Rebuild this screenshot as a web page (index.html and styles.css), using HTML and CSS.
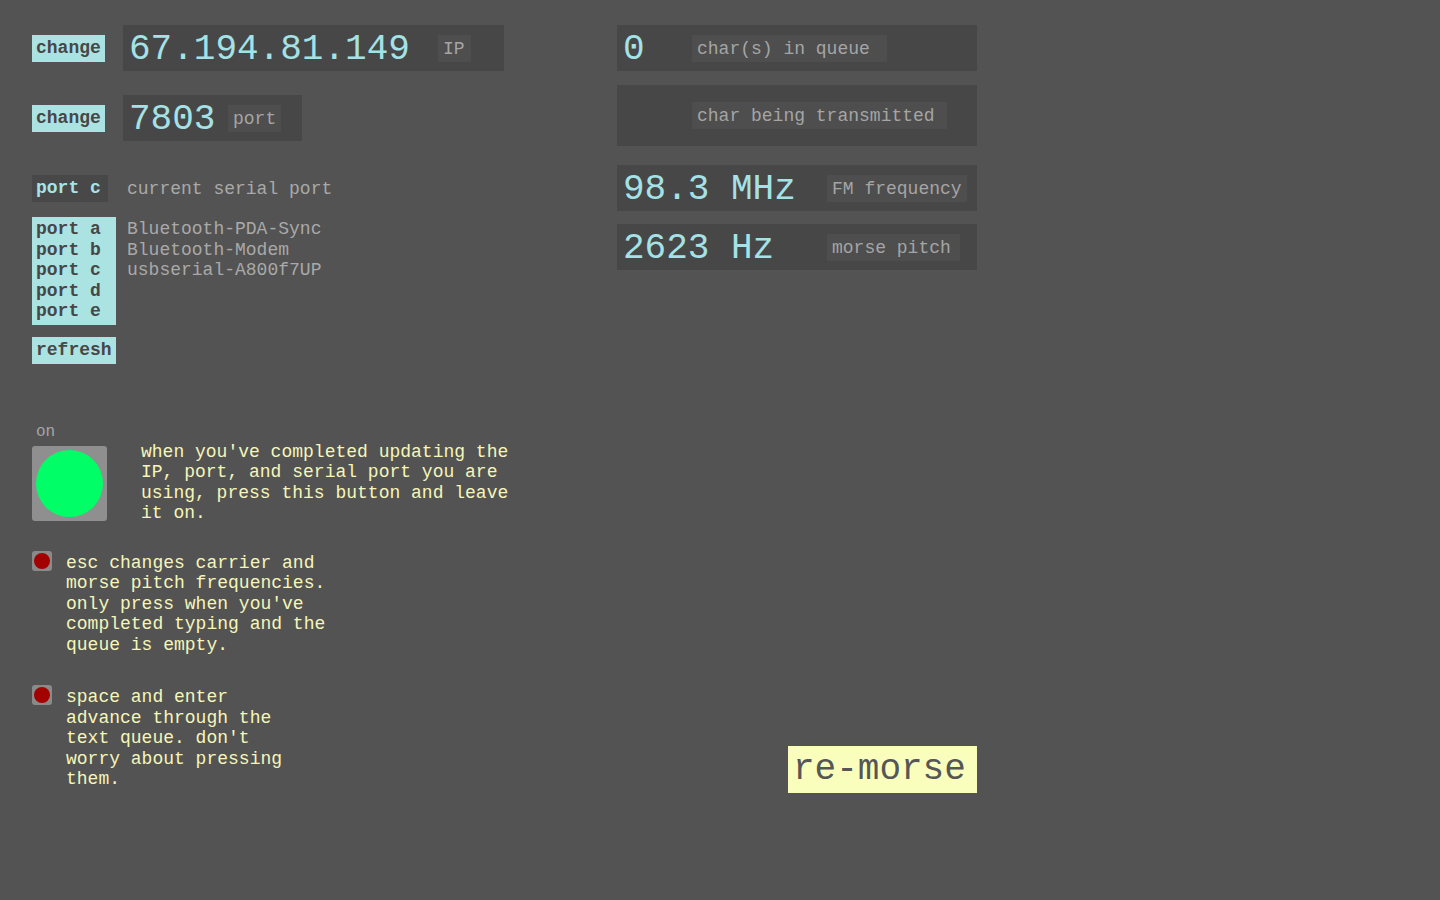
FILE: index.html
```html
<!DOCTYPE html>
<html>
<head>
<meta charset="utf-8">
<title>re-morse</title>
<link rel="stylesheet" href="styles.css">
</head>
<body>
<div class="app">
  <div class="col-left">
    <div class="row row-ip">
      <div class="btn">change</div>
      <div class="panel panel-ip">
        <span class="big val-ip">67.194.81.149</span>
        <span class="lbl lbl-ip">IP</span>
      </div>
    </div>
    <div class="row row-port">
      <div class="btn">change</div>
      <div class="panel panel-port">
        <span class="big val-port">7803</span>
        <span class="lbl lbl-port">port</span>
      </div>
    </div>
    <div class="row row-serial">
      <div class="current">port c</div>
      <span class="grey">current serial port</span>
    </div>
    <div class="row row-list">
      <div class="portlist">
        <div>port a</div>
        <div>port b</div>
        <div>port c</div>
        <div>port d</div>
        <div>port e</div>
      </div>
      <div class="devices grey">
        <div>Bluetooth-PDA-Sync</div>
        <div>Bluetooth-Modem</div>
        <div>usbserial-A800f7UP</div>
      </div>
    </div>
    <div class="row row-refresh">
      <div class="btn btn-refresh">refresh</div>
    </div>
    <div class="on-label">on</div>
    <div class="row row-toggle">
      <div class="toggle"><div class="toggle-dot"></div></div>
      <p class="note note-toggle">when you've completed updating the<br>IP, port, and serial port you are<br>using, press this button and leave<br>it on.</p>
    </div>
    <div class="row row-key">
      <div class="key"><div class="key-dot"></div></div>
      <p class="note">esc changes carrier and<br>morse pitch frequencies.<br>only press when you've<br>completed typing and the<br>queue is empty.</p>
    </div>
    <div class="row row-key row-key2">
      <div class="key"><div class="key-dot"></div></div>
      <p class="note">space and enter<br>advance through the<br>text queue. don't<br>worry about pressing<br>them.</p>
    </div>
  </div>
  <div class="col-right">
    <div class="panel rpanel">
      <span class="big num-short">0</span>
      <span class="lbl lbl-queue">char(s) in queue</span>
    </div>
    <div class="panel rpanel rpanel-tall">
      <span class="big num-short"></span>
      <span class="lbl lbl-trans">char being transmitted</span>
    </div>
    <div class="panel rpanel rpanel-fm">
      <span class="big num-long">98.3 MHz</span>
      <span class="lbl lbl-fm">FM frequency</span>
    </div>
    <div class="panel rpanel rpanel-pitch">
      <span class="big num-long">2623 Hz</span>
      <span class="lbl lbl-pitch">morse pitch</span>
    </div>
    <div class="remorse">re-morse</div>
  </div>
</div>
</body>
</html>
```

FILE: styles.css
```css
html, body {
  margin: 0;
  padding: 0;
  background: #535353;
  width: 1440px;
  height: 900px;
  overflow: hidden;
}

body {
  font-family: "Liberation Mono", "Courier New", monospace;
  font-size: 18px;
  color: #a9a9a9;
}

.app {
  display: flex;
  padding: 25px 0 0 32px;
}

.col-left {
  width: 585px;
  display: flex;
  flex-direction: column;
}

.col-right {
  width: 360px;
  display: flex;
  flex-direction: column;
}

.row {
  display: flex;
  align-items: center;
}

.btn {
  background: #abe3e3;
  color: #474747;
  font-weight: bold;
  height: 27px;
  line-height: 27px;
  padding: 0 4px;
  width: 65px;
}

.row-ip .btn,
.row-port .btn {
  margin-right: 18px;
}

.panel {
  background: #474747;
  height: 46px;
  display: flex;
  align-items: center;
  box-sizing: border-box;
}

.panel-ip {
  width: 381px;
  padding-left: 6px;
}

.panel-port {
  width: 179px;
  padding-left: 6px;
}

.row-port {
  margin-top: 24px;
}

.big {
  font-size: 36px;
  color: #a4e2e6;
  height: 46px;
  line-height: 50px;
  white-space: pre;
}

.val-ip {
  width: 309px;
}

.val-port {
  width: 99px;
}

.lbl {
  background: #4e4e4e;
  color: #a5a5a5;
  height: 27px;
  line-height: 28px;
  padding-left: 5px;
  box-sizing: border-box;
  white-space: pre;
}

.lbl-ip { width: 33px; }
.lbl-port { width: 53px; }
.lbl-queue { width: 195px; }
.lbl-trans { width: 255px; }
.lbl-fm { width: 140px; }
.lbl-pitch { width: 133px; }

.row-serial {
  margin-top: 34px;
}

.current {
  background: #484848;
  color: #a6e4e8;
  font-weight: bold;
  height: 27px;
  line-height: 27px;
  padding: 0 4px;
  width: 68px;
  margin-right: 19px;
}

.grey {
  color: #a9a9a9;
}

.row-list {
  margin-top: 15px;
  align-items: flex-start;
}

.portlist {
  background: #abe3e3;
  color: #474747;
  font-weight: bold;
  line-height: 20.5px;
  padding: 2px 4px 3px;
  width: 76px;
  margin-right: 11px;
}

.devices {
  line-height: 20.5px;
  padding-top: 2px;
}

.row-refresh {
  margin-top: 12px;
}

.btn-refresh {
  width: 76px;
}

.on-label {
  margin-top: 59px;
  margin-left: 4px;
  font-size: 16px;
  line-height: 18px;
  color: #a6a6a6;
}

.row-toggle {
  margin-top: 5px;
  align-items: flex-start;
}

.toggle {
  width: 75px;
  height: 75px;
  border-radius: 3px;
  background: #8f8f8f;
  display: flex;
  align-items: center;
  justify-content: center;
  margin-right: 34px;
}

.toggle-dot {
  width: 67px;
  height: 67px;
  border-radius: 50%;
  background: #00ff66;
}

.note {
  margin: 0;
  color: #f6f6b8;
  line-height: 20.5px;
  white-space: nowrap;
}

.note-toggle {
  margin-top: -4px;
}

.row-key {
  margin-top: 27px;
  align-items: flex-start;
}

.row-key .note {
  margin-top: 2px;
}

.row-key2 {
  margin-top: 30px;
}

.key {
  width: 20px;
  height: 20px;
  border-radius: 3px;
  background: #8a8a8a;
  display: flex;
  align-items: center;
  justify-content: center;
  margin-right: 14px;
}

.key-dot {
  width: 16px;
  height: 16px;
  border-radius: 50%;
  background: #a30000;
}

.rpanel {
  width: 360px;
  padding-left: 6px;
}

.rpanel-tall {
  height: 61px;
  margin-top: 14px;
}

.rpanel-fm {
  margin-top: 19px;
}

.rpanel-pitch {
  margin-top: 13px;
}

.num-short {
  width: 69px;
}

.num-long {
  width: 204px;
}

.remorse {
  align-self: flex-end;
  margin-top: 476px;
  background: #fafebc;
  color: #565656;
  font-size: 36px;
  height: 47px;
  line-height: 47px;
  width: 189px;
  box-sizing: border-box;
  padding-left: 5px;
}
```
